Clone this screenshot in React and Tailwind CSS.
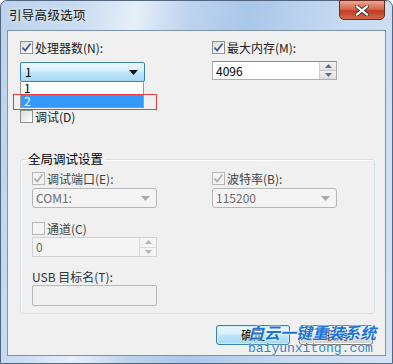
import React from 'react';

const Check = ({ checked, disabled }) => (
  <span
    className={
      disabled
        ? 'w-[13px] h-[13px] shrink-0 border border-[#b8b8b8] bg-[#f4f4f4] flex items-center justify-center'
        : 'w-[13px] h-[13px] shrink-0 border border-[#8e8f8f] bg-[linear-gradient(135deg,#dcdcdc,#ffffff)] flex items-center justify-center'
    }
  >
    {checked && (
      <svg width="11" height="11" viewBox="0 0 11 11">
        <path
          d="M1.5 5.5 L4.2 8.5 L9.5 1.5"
          fill="none"
          stroke={disabled ? '#b0b0b0' : '#3f5b93'}
          strokeWidth="1.8"
        />
      </svg>
    )}
  </span>
);

const Arrow = ({ color }) => (
  <svg width="9" height="5" viewBox="0 0 9 5">
    <path d="M0 0 H9 L4.5 5 Z" fill={color} />
  </svg>
);

const Spinner = () => (
  <div className="w-[17px] h-full flex flex-col border-l border-[#d0d0d0]">
    <div className="flex-1 flex items-center justify-center bg-[linear-gradient(#f4f4f4,#e2e2e2)] border-b border-[#c8c8c8]">
      <svg width="7" height="4" viewBox="0 0 7 4"><path d="M0 4 L3.5 0 L7 4 Z" fill="#5b6f93" /></svg>
    </div>
    <div className="flex-1 flex items-center justify-center bg-[linear-gradient(#f0f0f0,#dedede)]">
      <svg width="7" height="4" viewBox="0 0 7 4"><path d="M0 0 L7 0 L3.5 4 Z" fill="#5b6f93" /></svg>
    </div>
  </div>
);

const DisabledSpinner = () => (
  <div className="w-[17px] h-full flex flex-col border-l border-[#dadada]">
    <div className="flex-1 flex items-center justify-center border-b border-[#dadada]">
      <svg width="7" height="4" viewBox="0 0 7 4"><path d="M0 4 L3.5 0 L7 4 Z" fill="#b4b4b4" /></svg>
    </div>
    <div className="flex-1 flex items-center justify-center">
      <svg width="7" height="4" viewBox="0 0 7 4"><path d="M0 0 L7 0 L3.5 4 Z" fill="#b4b4b4" /></svg>
    </div>
  </div>
);

const DisabledCombo = ({ value }) => (
  <div className="w-[125px] h-[20px] border border-[#b4b8bb] rounded-[3px] bg-[#f4f4f4] flex items-center justify-between pl-[3px] pr-[6px] text-[#6d6d6d]">
    <span className="leading-[18px]">{value}</span>
    <Arrow color="#a9a9a9" />
  </div>
);

const App = () => {
  return (
    <div className="w-[393px] h-[364px] relative overflow-hidden bg-white font-['Noto_Sans_CJK_SC',sans-serif] text-[12px] text-[#1b1b1b]">
      <div className="w-full h-full flex flex-col rounded-t-[7px] border border-[#52667f] px-[6px] pb-[7px] bg-[linear-gradient(100deg,#bcd2ec_0%,#c9dcf2_18%,#e6eff9_30%,#bcd3ee_42%,#aac7e8_55%,#c5daf1_75%,#d4e4f5_100%)]">
        <div className="h-[29px] flex items-start justify-between">
          <span className="mt-[5px] pl-[2px] text-[12.5px] leading-[18px] tracking-[0.3px] text-[#111] [text-shadow:0_0_6px_#ffffff]">引导高级选项</span>
          <div className="-mt-[1px] mr-[1px] w-[46px] h-[20px] rounded-b-[5px] border border-[#6b2a1f] bg-[linear-gradient(#e9a895,#d8674e_45%,#c23b22_55%,#d26a4b)] flex items-center justify-center">
            <svg width="14" height="11" viewBox="0 0 14 11">
              <path d="M2 1.5 L12 9.5 M12 1.5 L2 9.5" stroke="#3a3a3a" strokeWidth="4" strokeLinecap="square" />
              <path d="M2 1.5 L12 9.5 M12 1.5 L2 9.5" stroke="#ffffff" strokeWidth="2.2" strokeLinecap="square" />
            </svg>
          </div>
        </div>

        <div className="flex-1 flex flex-col border border-[#7f93ab] bg-[#f0f0f0] pl-[12px] pr-[10px] pt-[10px]">
          <div className="grid grid-cols-[192px_1fr]">
            <div className="flex flex-col">
              <div className="h-[13px] flex items-center gap-[2px]">
                <Check checked />
                <span className="leading-[13px]">处理器数(N):</span>
              </div>
              <div className="relative mt-[8px] w-[125px] h-[20px]">
                <div className="w-full h-full border border-[#3c7fb1] rounded-[2px] bg-[linear-gradient(#eaf6fd,#d9f0fc_45%,#bee6fd_50%,#a7d9f5)] flex items-center justify-between pl-[4px] pr-[6px]">
                  <span className="leading-[18px] text-black">1</span>
                  <Arrow color="#111111" />
                </div>
                <div className="absolute top-full left-0 w-[124px] bg-white border border-[#9a9a9a] border-t-0">
                  <div className="h-[12px] leading-[12px] pl-[3px] text-black">1</div>
                  <div className="h-[13px] leading-[13px] pl-[3px] bg-[#3399ff] text-white">2</div>
                </div>
                <div className="absolute left-[-7px] top-[32px] w-[144px] h-[16px] border border-[#ee3b3b]" />
              </div>
              <div className="mt-[28px] h-[13px] flex items-center gap-[2px]">
                <Check />
                <span className="leading-[13px]">调试(D)</span>
              </div>
            </div>

            <div className="flex flex-col">
              <div className="h-[13px] flex items-center gap-[2px]">
                <Check checked />
                <span className="leading-[13px]">最大内存(M):</span>
              </div>
              <div className="mt-[7px] w-[125px] h-[19px] border border-[#abadb3] border-t-[#8a8d93] bg-white flex">
                <span className="flex-1 pl-[3px] leading-[17px] text-black">4096</span>
                <Spinner />
              </div>
            </div>
          </div>

          <fieldset className="mt-[26px] w-[355px] border border-[#d5dfe5] rounded-[3px] pl-[11px] pb-[7px] shadow-[inset_1px_1px_0_#ffffff]">
            <legend className="-ml-[6px] px-[2px] leading-[20px] text-[12.5px] text-black">全局调试设置</legend>
            <div className="grid grid-cols-[180px_1fr]">
              <div className="flex flex-col">
                <div className="mt-[3px] h-[13px] flex items-center gap-[2px]">
                  <Check checked disabled />
                  <span className="leading-[13px] text-[#444]">调试端口(E):</span>
                </div>
                <div className="mt-[3px]">
                  <DisabledCombo value="COM1:" />
                </div>
                <div className="mt-[14px] h-[13px] flex items-center gap-[2px]">
                  <Check disabled />
                  <span className="leading-[13px] text-[#444]">通道(C)</span>
                </div>
                <div className="mt-[2px] w-[125px] h-[20px] border border-[#cfd1d4] bg-[#f4f4f4] flex text-[#6d6d6d]">
                  <span className="flex-1 pl-[3px] leading-[18px]">0</span>
                  <DisabledSpinner />
                </div>
                <div className="mt-[13px] h-[13px] leading-[13px] text-[#333]">USB 目标名(T):</div>
                <div className="mt-[2px] w-[125px] h-[21px] border border-[#b5b8bc] rounded-[2px] bg-[#f0f0f0]" />
              </div>
              <div className="flex flex-col">
                <div className="mt-[3px] h-[13px] flex items-center gap-[2px]">
                  <Check checked disabled />
                  <span className="leading-[13px] text-[#444]">波特率(B):</span>
                </div>
                <div className="mt-[3px]">
                  <DisabledCombo value="115200" />
                </div>
              </div>
            </div>
          </fieldset>

          <div className="mt-[11px] flex justify-end gap-[9px] pr-[2px]">
            <button className="w-[74px] h-[20px] border border-[#3c7fb1] rounded-[3px] bg-[linear-gradient(#eaf6fd,#d9f0fc_45%,#bee6fd_50%,#a7d9f5)] shadow-[inset_0_0_0_1px_#c7ecfd] leading-[18px] text-black">确定</button>
            <button className="w-[74px] h-[20px] border border-[#707070] rounded-[3px] bg-[linear-gradient(#f2f2f2,#ebebeb_45%,#dddddd_50%,#cfcfcf)] shadow-[inset_0_0_0_1px_#fcfcfc] leading-[18px] text-black">取消</button>
          </div>
        </div>
      </div>

      <div className="absolute left-[248px] top-[322px] flex flex-col pointer-events-none">
        <span className="font-bold italic text-[16px] leading-[20px] text-[#1c74d8] [text-shadow:0_0_2px_#ffffff,0_0_2px_#ffffff]">白云一键重装系统</span>
        <span className="font-['Liberation_Mono',monospace] text-[13px] leading-[14px] text-[#2f82d8] [text-shadow:0_0_2px_#ffffff]">baiyunxitong.com</span>
      </div>
    </div>
  );
};

export default App;
